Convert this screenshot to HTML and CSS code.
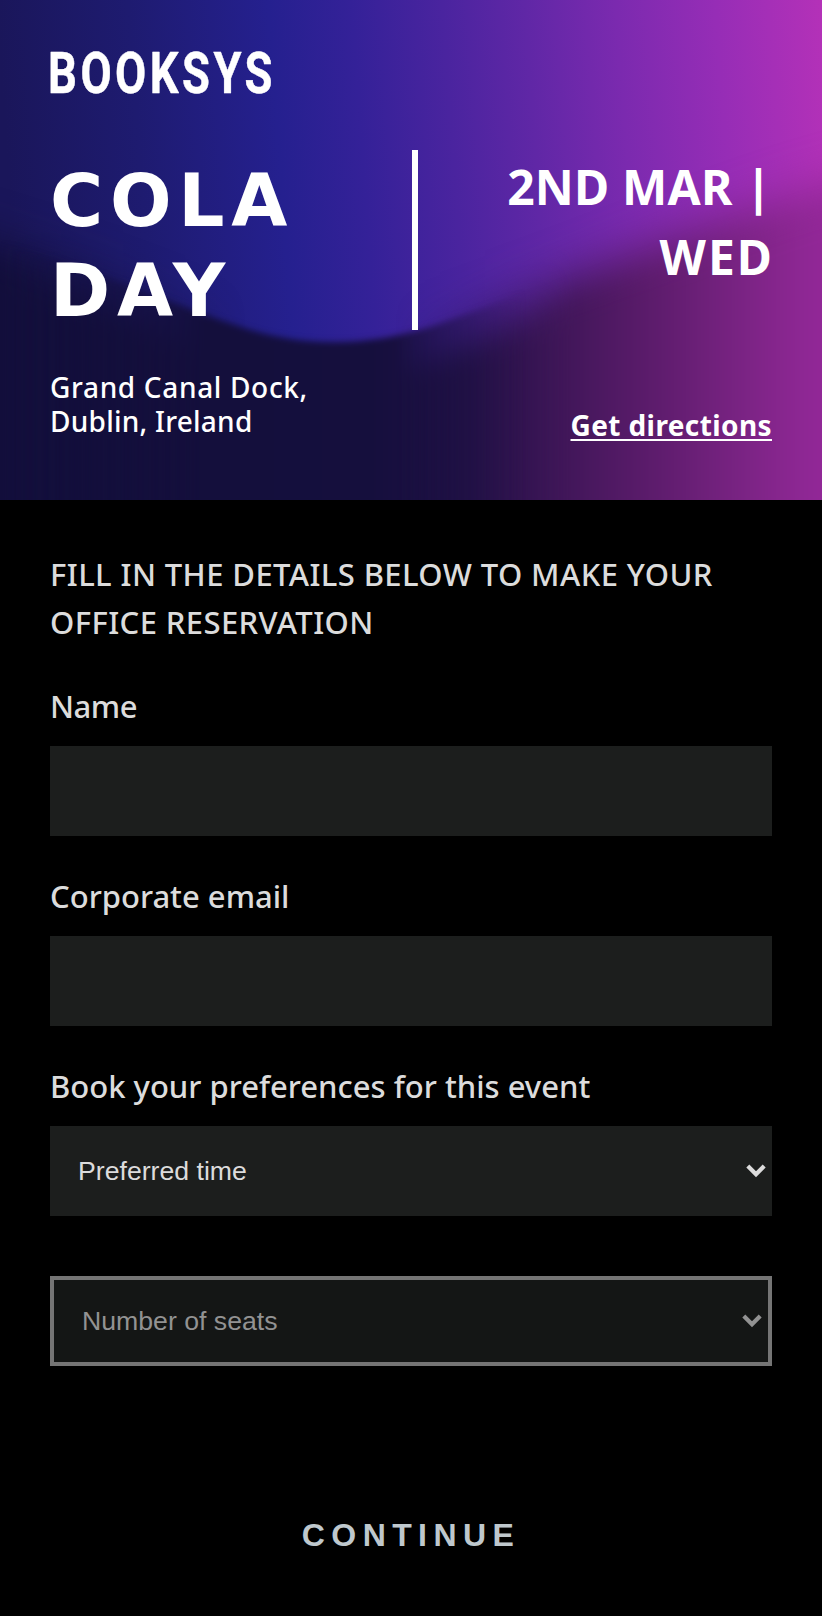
FILE: index.html
```html
<!DOCTYPE html>
<html lang="en">
<head>
<meta charset="utf-8">
<title>Booksys – Cola Day</title>
<link rel="stylesheet" href="styles.css">
</head>
<body>
<header class="hero">
  <svg class="hero-art" viewBox="0 0 822 500" preserveAspectRatio="none" aria-hidden="true">
    <defs>
      <linearGradient id="sky" gradientUnits="userSpaceOnUse" x1="0" y1="60" x2="822" y2="0">
        <stop offset="0" stop-color="#1a165a"/>
        <stop offset=".16" stop-color="#1e1b70"/>
        <stop offset=".33" stop-color="#25208f"/>
        <stop offset=".43" stop-color="#342198"/>
        <stop offset=".54" stop-color="#4a249f"/>
        <stop offset=".64" stop-color="#6027a6"/>
        <stop offset=".75" stop-color="#7b2aaf"/>
        <stop offset=".87" stop-color="#962db6"/>
        <stop offset="1" stop-color="#b431b8"/>
      </linearGradient>
      <linearGradient id="wave" gradientUnits="userSpaceOnUse" x1="0" y1="0" x2="822" y2="0">
        <stop offset="0" stop-color="#130f3c"/>
        <stop offset=".45" stop-color="#150f3d"/>
        <stop offset=".57" stop-color="#201145"/>
        <stop offset=".68" stop-color="#3f1658"/>
        <stop offset=".8" stop-color="#5e1c6d"/>
        <stop offset=".91" stop-color="#7c2485"/>
        <stop offset="1" stop-color="#942899"/>
      </linearGradient>
      <linearGradient id="fadeSoft" gradientUnits="userSpaceOnUse" x1="0" y1="0" x2="822" y2="0">
        <stop offset="0" stop-color="#fff"/>
        <stop offset=".3" stop-color="#fff" stop-opacity="0"/>
        <stop offset=".48" stop-color="#fff" stop-opacity="0"/>
        <stop offset=".7" stop-color="#fff"/>
      </linearGradient>
      <linearGradient id="fadeSharp" gradientUnits="userSpaceOnUse" x1="0" y1="0" x2="822" y2="0">
        <stop offset="0" stop-color="#fff" stop-opacity="0"/>
        <stop offset=".25" stop-color="#fff"/>
        <stop offset=".48" stop-color="#fff"/>
        <stop offset=".64" stop-color="#fff" stop-opacity="0"/>
      </linearGradient>
      <mask id="soft" class="alpha-mask" maskUnits="userSpaceOnUse" x="0" y="0" width="822" height="500"><rect width="822" height="500" fill="url(#fadeSoft)"/></mask>
      <mask id="sharp" class="alpha-mask" maskUnits="userSpaceOnUse" x="0" y="0" width="822" height="500"><rect width="822" height="500" fill="url(#fadeSharp)"/></mask>
      <path id="hill" d="M-120 205C-60 225 0 242 60 262C150 292 190 311 235 325C290 345 360 351 440 324C530 292 600 266 680 235C760 204 830 180 960 150V640H-120Z"/>
      <filter id="b1" color-interpolation-filters="sRGB" filterUnits="userSpaceOnUse" x="-160" y="0" width="1200" height="700"><feGaussianBlur stdDeviation="3"/></filter>
      <filter id="b2" color-interpolation-filters="sRGB" filterUnits="userSpaceOnUse" x="-160" y="0" width="1200" height="700"><feGaussianBlur stdDeviation="22"/></filter>
      <filter id="b3" color-interpolation-filters="sRGB" filterUnits="userSpaceOnUse" x="-160" y="0" width="1200" height="700"><feGaussianBlur stdDeviation="14"/></filter>
    </defs>
    <rect width="822" height="500" fill="url(#sky)"/>
    <use href="#hill" y="34" fill="url(#wave)" filter="url(#b3)"/>
    <g mask="url(#soft)"><use href="#hill" fill="url(#wave)" filter="url(#b2)"/></g>
    <g mask="url(#sharp)"><use href="#hill" fill="url(#wave)" filter="url(#b1)"/></g>
  </svg>
  <div class="hero-body">
    <svg class="logo" viewBox="0 0 224 46" role="img" aria-label="Booksys">
      <text class="logo-text" x="-2" y="43" textLength="228" lengthAdjust="spacingAndGlyphs">BOOKSYS</text>
    </svg>
    <div class="headline">
      <h1 class="title">COLA<br>DAY</h1>
      <p class="date">2ND MAR |<br><span class="weekday">WED</span></p>
    </div>
    <div class="place">
      <address class="address">Grand Canal Dock,<br><span class="city">Dublin, Ireland</span></address>
      <a class="directions" href="#">Get directions</a>
    </div>
  </div>
</header>
<main class="form">
  <h2 class="intro">FILL IN THE DETAILS BELOW TO MAKE YOUR<br>OFFICE RESERVATION</h2>
  <label class="label label-name" for="name">Name</label>
  <input class="field" id="name" type="text">
  <label class="label" for="email">Corporate email</label>
  <input class="field" id="email" type="email">
  <div class="label">Book your preferences for this event</div>
  <div class="field select"><span>Preferred time</span><svg class="chevron" viewBox="0 0 20 14"><path d="M1.8 2L10 10.2L18.2 2"/></svg></div>
  <div class="field select disabled"><span>Number of seats</span><svg class="chevron" viewBox="0 0 20 14"><path d="M1.8 2L10 10.2L18.2 2"/></svg></div>
  <button class="continue" type="button">CONTINUE</button>
</main>
</body>
</html>
```
FILE: styles.css
```css
* { box-sizing: border-box; }
body { margin: 0; background: #000; color: #dcdcdc; font-family: "Noto Sans", sans-serif; }
h1, h2, p { margin: 0; }
.hero { display: grid; height: 500px; overflow: hidden; color: #fff; }
.hero-art { grid-area: 1 / 1; width: 100%; height: 500px; }
.alpha-mask { mask-type: alpha; }
.hero-body { grid-area: 1 / 1; z-index: 1; display: flex; flex-direction: column; padding: 50px 50px 0; }
.logo { width: 224px; height: 46px; overflow: visible; }
.logo-text { fill: #fff; stroke: #fff; stroke-width: .5; stroke-linejoin: round; font: 700 58px Roboto, sans-serif; letter-spacing: 4.5px; }
.headline { display: flex; justify-content: space-between; height: 180px; margin-top: 54px; }
.title { width: 368px; height: 180px; padding-top: 6px; border-right: 6px solid #fff; font: 700 72.5px/90px "DejaVu Sans", sans-serif; letter-spacing: 6.7px; }
.date { padding-top: 2px; font-size: 48px; line-height: 70px; font-weight: 700; text-align: right; letter-spacing: .2px; }
.weekday { margin-right: -2px; letter-spacing: 2px; }
.place { display: flex; justify-content: space-between; margin-top: 40px; }
.address { font-size: 28px; line-height: 34px; font-style: normal; font-weight: 500; letter-spacing: .66px; }
.city { letter-spacing: .25px; }
.directions { margin-top: 37px; color: #fff; font-size: 28px; line-height: 36px; font-weight: 700; letter-spacing: .4px; text-decoration-thickness: 2px; text-underline-offset: 3px; }
.form { display: flex; flex-direction: column; padding: 50px 50px 0; }
.intro { height: 96px; font-size: 31px; line-height: 48px; font-weight: 500; letter-spacing: .4px; white-space: nowrap; }
.label { height: 48px; margin: 36px 0 16px; font-size: 31px; line-height: 48px; font-weight: 500; white-space: nowrap; }
.label-name { letter-spacing: -.5px; }
.field { width: 722px; height: 90px; padding: 0 28px; border: 0; border-radius: 0; background: #1c1e1d; color: #dcdcdc; font: 26.67px "Liberation Sans", Arial, sans-serif; }
.select { display: flex; align-items: center; justify-content: space-between; padding-right: 6px; }
.chevron { width: 20px; height: 14px; overflow: visible; fill: none; stroke: #dcdcdc; stroke-width: 4.2; }
.disabled { margin-top: 60px; border: 4px solid #757575; background: #141615; color: #929292; }
.disabled .chevron { stroke: #929292; }
.continue { align-self: center; margin-top: 134px; padding: 0; border: 0; background: none; color: #bfc8cd; font: 700 32px/70px "Liberation Sans", Arial, sans-serif; letter-spacing: 6.4px; }
```
